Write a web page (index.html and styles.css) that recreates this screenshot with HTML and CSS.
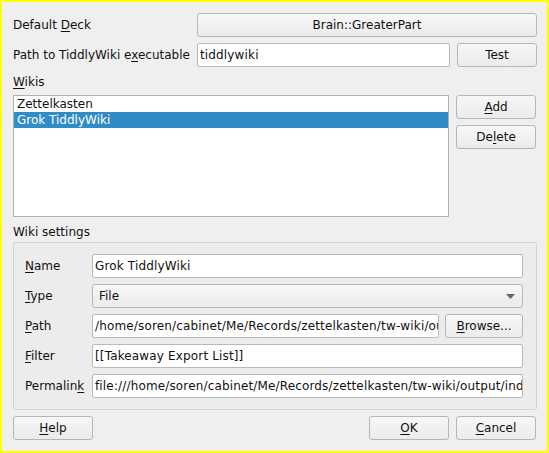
FILE: index.html
```html
<!DOCTYPE html>
<html>
<head>
<meta charset="utf-8">
<link rel="stylesheet" href="styles.css">
</head>
<body>
<div class="dialog">
  <div class="top">
    <div class="label"><span>Default <u>D</u>eck</span></div>
    <div class="btn span2"><span>Brain::GreaterPart</span></div>
    <div class="label"><span>Path to TiddlyWiki e<u>x</u>ecutable</span></div>
    <div class="input"><span>tiddlywiki</span></div>
    <div class="btn"><span>Test</span></div>
  </div>
  <div class="section-label"><u>W</u>ikis</div>
  <div class="wikis">
    <div class="list">
      <div class="item">Zettelkasten</div>
      <div class="item selected">Grok TiddlyWiki</div>
    </div>
    <div class="side">
      <div class="btn"><span><u>A</u>dd</span></div>
      <div class="btn"><span>De<u>l</u>ete</span></div>
    </div>
  </div>
  <div class="section-label second">Wiki settings</div>
  <div class="group">
    <div class="label"><span><u>N</u>ame</span></div>
    <div class="input"><span>Grok TiddlyWiki</span></div>
    <div class="label"><span><u>T</u>ype</span></div>
    <div class="btn combo"><span>File</span><svg width="9" height="5" viewBox="0 0 9 5"><path d="M0 0 L9 0 L4.5 5 Z" fill="#666"/></svg></div>
    <div class="label"><span><u>P</u>ath</span></div>
    <div class="pathrow">
      <div class="input clip"><span>/home/soren/cabinet/Me/Records/zettelkasten/tw-wiki/output/index.html</span></div>
      <div class="btn"><span><u>B</u>rowse...</span></div>
    </div>
    <div class="label"><span><u>F</u>ilter</span></div>
    <div class="input"><span>[[Takeaway Export List]]</span></div>
    <div class="label"><span>Permalin<u>k</u></span></div>
    <div class="input clip"><span>file:///home/soren/cabinet/Me/Records/zettelkasten/tw-wiki/output/index.html</span></div>
  </div>
  <div class="bottom">
    <div class="btn"><span><u>H</u>elp</span></div>
    <div class="spacer"></div>
    <div class="btn"><span><u>O</u>K</span></div>
    <div class="btn"><span><u>C</u>ancel</span></div>
  </div>
</div>
</body>
</html>
```
FILE: styles.css
```css
html, body {
  margin: 0;
  padding: 0;
}
body {
  width: 549px;
  height: 453px;
  overflow: hidden;
  font-family: "DejaVu Sans", sans-serif;
  font-size: 12px;
  color: #111;
}
.dialog {
  box-sizing: border-box;
  width: 549px;
  height: 453px;
  border: 2px solid #ffff00;
  background: #efefef;
  padding: 11px 11px 0 11px;
}
u {
  text-decoration: underline;
  text-underline-offset: 2px;
  text-decoration-thickness: 1px;
}
.top {
  display: grid;
  grid-template-columns: 177px 253px 80px;
  column-gap: 7px;
  row-gap: 6px;
}
.span2 {
  grid-column: span 2;
}
.label {
  display: flex;
  align-items: center;
  height: 24px;
  white-space: nowrap;
}
.btn {
  box-sizing: border-box;
  height: 24px;
  border: 1px solid #b6b6b6;
  border-radius: 3px;
  background: linear-gradient(#f7f7f7, #ebebeb);
  display: flex;
  align-items: center;
  justify-content: center;
  white-space: nowrap;
}
.input {
  box-sizing: border-box;
  height: 24px;
  border: 1px solid #b9b9b9;
  border-radius: 2px;
  background: #fff;
  display: flex;
  align-items: center;
  padding-left: 2px;
  white-space: nowrap;
  overflow: hidden;
  letter-spacing: 0.15px;
}
.section-label {
  height: 16px;
  line-height: 16px;
  margin-top: 7px;
  margin-bottom: 5px;
}
.section-label.second {
  margin-top: 7px;
  margin-bottom: 2px;
}
.wikis {
  display: flex;
  gap: 7px;
}
.list {
  box-sizing: border-box;
  width: 437px;
  height: 122px;
  border: 1px solid #b0b0b0;
  background: #fff;
}
.item {
  height: 16px;
  line-height: 16px;
  padding-left: 3px;
}
.item.selected {
  background: #308cc6;
  color: #fff;
}
.side {
  display: flex;
  flex-direction: column;
  gap: 6px;
  width: 80px;
}
.group {
  box-sizing: border-box;
  width: 524px;
  height: 168px;
  border: 1px solid #d3d3d3;
  border-radius: 2px;
  background: #ececec;
  padding: 11px 12px 0 11px;
  display: grid;
  grid-template-columns: 61px 431px;
  column-gap: 6px;
  row-gap: 6px;
  align-content: start;
}
.combo {
  justify-content: space-between;
  padding: 0 7px 0 6px;
}
.pathrow {
  display: flex;
  gap: 6px;
}
.pathrow .input {
  width: 347px;
  flex: none;
}
.pathrow .btn {
  flex: 1;
}
.clip {
  overflow: hidden;
}
.bottom {
  display: flex;
  gap: 7px;
  margin-top: 6px;
}
.bottom .btn {
  width: 80px;
}
.spacer {
  flex: 1;
}
```
